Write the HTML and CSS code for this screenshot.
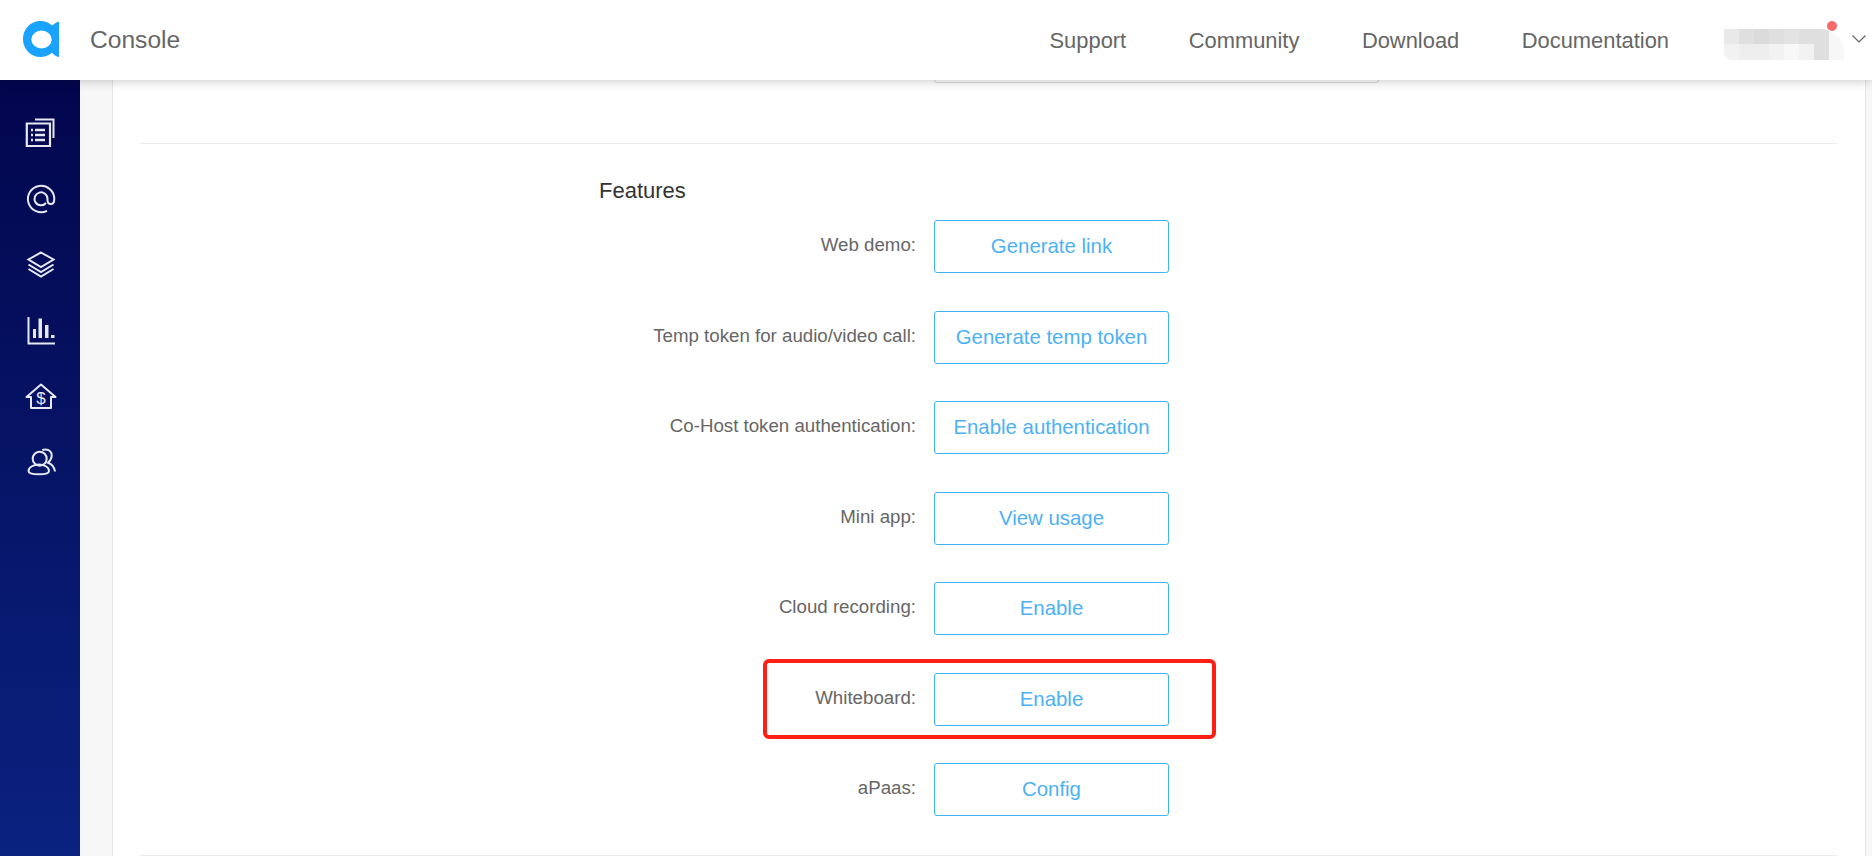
FILE: index.html
```html
<!DOCTYPE html>
<html lang="en">
<head>
<meta charset="utf-8">
<title>Console</title>
<link rel="stylesheet" href="styles.css">
</head>
<body>
<header class="topbar">
  <div class="brand">
    <svg class="logo" viewBox="0 0 38 38" width="38" height="38"><path fill="#19a3ff" fill-rule="evenodd" d="M18.500 1C23 1 27 2.700 30 5.500C32 4 34 2.500 37 1.500V37C34 36.500 32 35 30 32.700C27 35.300 23 37 18.500 37C8.500 37 1 29 1 19S8.500 1 18.500 1ZM19.500 10.500A10.200 9 0 1 0 19.500 28.500A10.200 9 0 1 0 19.500 10.500Z"/></svg>
    <span class="brand-name">Console</span>
  </div>
  <nav class="topnav">
    <a class="topnav-link">Support</a>
    <a class="topnav-link">Community</a>
    <a class="topnav-link">Download</a>
    <a class="topnav-link">Documentation</a>
  </nav>
  <div class="user">
    <div class="mosaic">
      <i class="m1"></i><i class="m2"></i><i class="m3"></i><i class="m2"></i><i class="m4"></i><i class="m2"></i><i class="m2"></i><i class="m5"></i>
      <i class="m6"></i><i class="m7"></i><i class="m7"></i><i class="m6"></i><i class="m8"></i><i class="m6"></i><i class="m2"></i><i class="m5"></i>
    </div>
    <span class="dot"></span>
    <svg class="chev" viewBox="0 0 16 10" width="16" height="10"><path d="M1.500 1.500L8 8L14.500 1.500" fill="none" stroke="#666" stroke-width="1.200"/></svg>
  </div>
</header>
<div class="body">
  <aside class="sidebar">
    <svg class="ico" viewBox="0 0 32 32"><path d="M10 2.500H28.500V21"/><path d="M6 6.500H25V29H1.800V6.500H6" stroke-width="2.200"/><path d="M6 13H8M10 13H20M6 18H8M10 18H20M6 23H8M10 23H20" stroke-width="2.400"/></svg>
    <svg class="ico" viewBox="0 0 32 32"><path d="M22 27.800A13.200 13.200 0 1 1 29.300 16C29.300 19 27.800 21 25.800 21S22.500 19.500 22.500 17V16A6.500 6.500 0 1 0 21 20"/></svg>
    <svg class="ico" viewBox="0 0 32 32"><path d="M16 3.500L28.500 10.500L16 18L3.500 10.500Z"/><path d="M3.500 15.500L16 23L28.500 15.500"/><path d="M3.500 20L16 27.500L28.500 20"/></svg>
    <svg class="ico" viewBox="0 0 32 32"><path d="M3.500 2V28.500H30"/><rect class="fill" x="8" y="14" width="3" height="9"/><rect class="fill" x="13.500" y="3.500" width="3.500" height="19.500"/><rect class="fill" x="20" y="10" width="3.500" height="13"/><rect class="fill" x="26" y="20" width="3.500" height="3"/></svg>
    <svg class="ico" viewBox="0 0 32 32"><path d="M1.500 16L16 3.500L30.500 16H26V27H6V16Z" stroke-linejoin="round"/><text class="ico-text" x="16" y="22.500">$</text></svg>
    <svg class="ico" viewBox="0 0 32 32"><circle cx="14.700" cy="11.700" r="7"/><path d="M3.500 24C3.500 20 9 17.500 14 17.500S24 20 24 24C24 26.500 20 27.300 14 27.300S3.500 26.500 3.500 24Z"/><path d="M17.300 3C21 1.500 27 3 26.700 9C26.500 12 25 14 23 15.700C26.500 17 29.500 20.500 30 24.500"/></svg>
  </aside>
  <main class="content">
    <section class="card">
      <div class="stub"></div>
      <hr class="divider divider-top">
      <h2 class="section-title">Features</h2>
      <div class="rows">
        <div class="row"><span class="label">Web demo:</span><button class="btn">Generate link</button></div>
        <div class="row"><span class="label">Temp token for audio/video call:</span><button class="btn">Generate temp token</button></div>
        <div class="row"><span class="label">Co-Host token authentication:</span><button class="btn">Enable authentication</button></div>
        <div class="row"><span class="label">Mini app:</span><button class="btn">View usage</button></div>
        <div class="row"><span class="label">Cloud recording:</span><button class="btn">Enable</button></div>
        <div class="row"><span class="label">Whiteboard:</span><button class="btn">Enable</button><span class="callout"></span></div>
        <div class="row"><span class="label">aPaas:</span><button class="btn">Config</button></div>
      </div>
      <hr class="divider divider-bottom">
    </section>
  </main>
</div>
</body>
</html>
```
FILE: styles.css
```css
* { box-sizing: border-box; }
html, body { margin: 0; height: 100%; overflow: hidden; }
body {
  font-family: "Liberation Sans", Arial, sans-serif;
  background: #f7f7f7;
  display: flex;
  flex-direction: column;
  height: 856px;
}
.topbar {
  height: 80px;
  flex: none;
  background: #fff;
  display: flex;
  align-items: center;
  padding-left: 22px;
  box-shadow: 0 1px 10px rgba(0, 0, 0, 0.22);
  position: relative;
  z-index: 2;
}
.brand { display: flex; align-items: center; gap: 30px; }
.logo { display: block; margin-top: -2px; }
.brand-name { font-size: 24.600px; color: #666; }
.topnav { margin-left: auto; display: flex; gap: 62.500px; margin-right: 55px; margin-top: 2px; }
.topnav-link { font-size: 21.900px; color: #666; }
.user { display: flex; align-items: center; width: 148px; height: 40px; position: relative; }
.mosaic {
  width: 120px;
  height: 31px;
  display: grid;
  grid-template-columns: repeat(8, 15px);
  grid-template-rows: 15px 16px;
  border-radius: 0 24px 0 8px;
  overflow: hidden;
  margin-top: 9px;
}
.m1 { background: #e9e9e9; }
.m2 { background: #dfdfdf; }
.m3 { background: #dbdbdb; }
.m4 { background: #e3e3e3; }
.m5 { background: #f7f7f7; }
.m6 { background: #f2f2f2; }
.m7 { background: #eeeeee; }
.m8 { background: #f8f8f8; }
.dot {
  position: absolute;
  left: 103px;
  top: 1px;
  width: 10px;
  height: 10px;
  border-radius: 50%;
  background: #f66a6a;
}
.chev { margin-left: 7px; margin-top: -2px; }
.body { flex: 1; display: flex; min-height: 0; }
.sidebar {
  width: 80px;
  flex: none;
  background: linear-gradient(180deg, #02064d 0%, #0a2280 100%);
  display: flex;
  flex-direction: column;
  align-items: center;
  gap: 34px;
  padding: 37px 0 0 2px;
}
.ico {
  width: 32px;
  height: 32px;
  fill: none;
  stroke: #e6e8f2;
  stroke-width: 2;
  display: block;
}
.ico .fill { fill: #e6e8f2; stroke: none; }
.ico-text {
  font-family: "Liberation Sans", sans-serif;
  font-size: 17px;
  text-anchor: middle;
  fill: #e6e8f2;
  stroke: none;
}
.content { flex: 1; padding: 0 6px 0 32px; min-width: 0; }
.card {
  height: 100%;
  background: #fff;
  border-left: 1px solid #e6e6e6;
  border-right: 1px solid #e6e6e6;
  padding: 0 28px;
}
.stub {
  width: 445px;
  height: 3px;
  margin-left: 793px;
  border: 1px solid #ddd;
  border-top: none;
  border-radius: 0 0 3px 3px;
}
.divider { border: none; height: 1px; background: #ebebeb; margin: 0; }
.divider-top { margin-top: 60px; }
.section-title {
  margin: 34px 0 16px 458px;
  font-size: 22px;
  line-height: 26px;
  font-weight: 400;
  color: #333;
}
.rows { display: flex; flex-direction: column; gap: 37.500px; margin-left: 458px; }
.row { display: flex; align-items: center; gap: 18px; position: relative; }
.label { width: 317px; text-align: right; font-size: 18.700px; color: #666; padding-bottom: 3px; }
.btn {
  width: 235px;
  height: 53px;
  background: #fff;
  border: 1px solid #3fb4f5;
  border-radius: 3px;
  font-family: inherit;
  font-size: 20.400px;
  color: #4db1f5;
  padding: 0;
}
.callout {
  position: absolute;
  left: 164px;
  top: -14px;
  width: 453px;
  height: 80px;
  border: 4px solid #ff2015;
  border-radius: 6px;
}
.divider-bottom { margin-top: 38.500px; }
```
